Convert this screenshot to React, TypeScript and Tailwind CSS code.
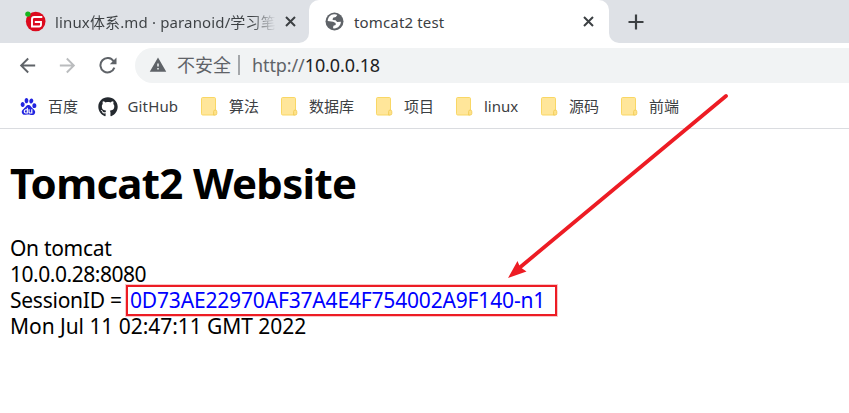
import type { ReactNode } from "react";
import { SiBaidu } from "react-icons/si";
import { FaGithub } from "react-icons/fa";
import { MdArrowBack, MdArrowForward, MdWarning } from "react-icons/md";

const uiFont = "font-['Noto_Sans','Noto_Sans_CJK_SC',sans-serif]";

function FolderIcon() {
  return (
    <svg width="17" height="19" viewBox="0 0 17 19">
      <rect x="0.5" y="0.5" width="14" height="17.5" rx="1.2" fill="#ffe69a" stroke="#f9d765" />
      <path d="M12.6 18V14.6a1.6 1.6 0 0 1 3.200 0V16.5a1.5 1.5 0 0 1-1.5 1.5z" fill="#ffe28a" stroke="#f2cd58" strokeWidth="0.9" />
    </svg>
  );
}

function GiteeIcon() {
  return (
    <svg className="shrink-0" width="21" height="21" viewBox="0 0 21 21">
      <circle cx="10.700" cy="10.5" r="9.8" fill="#dc0a1e" />
      <circle cx="2.900" cy="3.100" r="2.700" fill="#16b51e" />
      <path d="M17.300 6H9.300A2.300 2.300 0 0 0 7 8.300v7.200h7.200a1.800 1.800 0 0 0 1.800-1.800V11H9.800" fill="none" stroke="#fff" strokeWidth="1.9" />
    </svg>
  );
}

function GlobeIcon() {
  return (
    <svg className="shrink-0" width="19" height="19" viewBox="0 0 19 19">
      <circle cx="9.5" cy="9.5" r="9" fill="#5f6368" />
      <path d="M9 2.300c1.600-.1 2.600.2 3.300.7L10.800 4.900 8 5.800 7.600 8l3 .3 1.500 1.700 3.800-.2c-.1 3.500-2.700 6.500-6.700 6.600l-1.200-.2.400-2.500 2.300-.7-.1-2-2.500-1.200-5.400-.7C2.900 5.300 5.400 2.500 9 2.300z" fill="#fff" />
    </svg>
  );
}

function CloseIcon() {
  return (
    <svg className="shrink-0" width="11" height="11" viewBox="0 0 11 11" fill="none" stroke="#3c4043" strokeWidth="2">
      <path d="M1 1l9 9M10 1l-9 9" />
    </svg>
  );
}

function ReloadIcon() {
  return (
    <svg className="shrink-0" width="18" height="17" viewBox="0 0 18 17">
      <path d="M14.600 4.200A7.200 7.200 0 1 0 15.400 10.700" fill="none" stroke="#5f6368" strokeWidth="2" />
      <path d="M17.500 0.500V7.200H10.800Z" fill="#5f6368" />
    </svg>
  );
}

function Bookmark({ icon, label, box }: { icon: ReactNode; label: string; box: string }) {
  return (
    <div className={`flex shrink-0 items-center ${box}`}>
      <span className="flex w-[28px] shrink-0">{icon}</span>
      <span className="whitespace-nowrap">{label}</span>
    </div>
  );
}

export default function App() {
  return (
    <div className={`relative h-[413px] w-[849px] overflow-hidden bg-white text-[#3c4043] ${uiFont}`}>
      <div className="flex h-[43px] bg-white">
        <div className="flex h-[43px] w-[309px] items-center rounded-br-[10px] bg-[#dee1e6] pl-[25px]">
          <GiteeIcon />
          <div className="ml-[9px] w-[223px] shrink-0 bg-gradient-to-r from-[#3c4043] from-[88%] to-transparent to-[99%] bg-clip-text text-[15px] leading-[22px] tracking-[0.14px] whitespace-nowrap text-transparent">
            linux体系.md · paranoid/学习笔
          </div>
          <span className="ml-[7px]"><CloseIcon /></span>
        </div>
        <div className="h-[43px] w-[300px] bg-[#dee1e6]">
          <div className="flex h-full items-center rounded-t-[10px] bg-white pl-[16px]">
            <GlobeIcon />
            <span className="ml-[10px] w-[229px] text-[15px] leading-[22px] tracking-[0.15px]">tomcat2 test</span>
            <CloseIcon />
          </div>
        </div>
        <div className="flex flex-1 items-center rounded-bl-[10px] bg-[#dee1e6] pl-[19px]">
          <svg width="16" height="16" viewBox="0 0 16 16" stroke="#3c4043" strokeWidth="2.2">
            <path d="M8 0.500v15M0.500 8h15" />
          </svg>
        </div>
      </div>
      <div className="flex h-[44px] items-center pl-[16px] text-[#5f6368]">
        <MdArrowBack size={23} />
        <MdArrowForward size={23} className="ml-[17px] text-[#babcbe]" />
        <span className="ml-[20px]"><ReloadIcon /></span>
        <div className="ml-[18px] flex h-[35px] flex-1 items-center rounded-l-full bg-[#f1f3f4] pl-[14px] text-[18px]">
          <MdWarning size={18} />
          <span className="ml-[10px] w-[54px] whitespace-nowrap">不安全</span>
          <span className="ml-[7px] h-[20px] w-[2px] bg-[#a4a7aa]" />
          <span className="ml-[12px] tracking-[-0.1px] whitespace-nowrap">http://<span className="text-[#202124]">10.0.0.18</span></span>
        </div>
      </div>
      <div className="flex h-[42px] items-center border-b border-[#dadce0] pb-[2px] pl-[20px] text-[15px]">
        <Bookmark box="w-[78px]" label="百度" icon={<SiBaidu size={17} color="#2224e0" />} />
        <Bookmark box="w-[103px] tracking-[0.15px] gap-[1.5px]" label="GitHub" icon={<FaGithub size={20} color="#24292f" />} />
        <Bookmark box="w-[80px]" label="算法" icon={<FolderIcon />} />
        <Bookmark box="w-[95px]" label="数据库" icon={<FolderIcon />} />
        <Bookmark box="w-[80px]" label="项目" icon={<FolderIcon />} />
        <Bookmark box="w-[85px]" label="linux" icon={<FolderIcon />} />
        <Bookmark box="w-[80px]" label="源码" icon={<FolderIcon />} />
        <Bookmark box="w-[80px]" label="前端" icon={<FolderIcon />} />
      </div>
      <main className="pl-[10px] text-black">
        <h1 className="pt-[26px] text-[42px] leading-[56px] font-bold tracking-[-0.7px]">Tomcat2 Website</h1>
        <div className="mt-[24px] text-[21px] leading-[26px] whitespace-nowrap">
          <p className="tracking-[-0.3px]">On tomcat</p>
          <p className="tracking-[-0.47px]">10.0.0.28:8080</p>
          <p className="flex"><span className="w-[120px] tracking-[-0.25px]">SessionID =</span><span className="tracking-[-0.17px] text-[#0000ff]">0D73AE22970AF37A4E4F754002A9F140-n1</span></p>
          <p className="tracking-[-0.05px]">Mon Jul 11 02:47:11 GMT 2022</p>
        </div>
      </main>
      <div className="absolute top-[285px] left-[126px] h-[31px] w-[431px] border-2 border-[#ed1c24] shadow-[0_0_0_1px_#ed1c2440]" />
      <svg className="absolute top-0 left-0" width="849" height="413" viewBox="0 0 849 413">
        <path d="M726 96L518 269" stroke="#ed1c24" strokeWidth="3.8" strokeLinecap="round" />
        <path d="M508 278L517.500 261L520 267L526.500 271.500Z" fill="#ed1c24" />
      </svg>
    </div>
  );
}
